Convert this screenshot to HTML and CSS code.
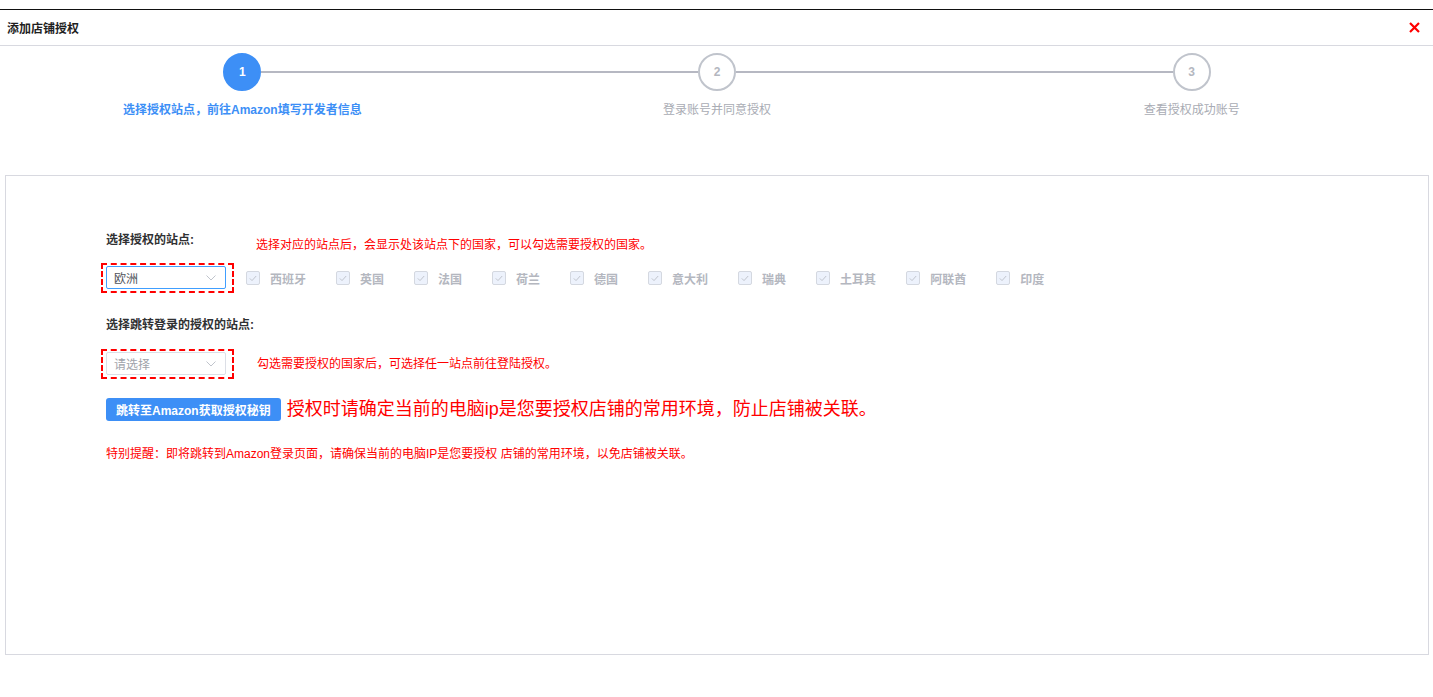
FILE: index.html
```html
<!DOCTYPE html>
<html lang="zh-CN">
<head>
    <meta charset="UTF-8">
    <meta name="viewport" content="width=device-width, initial-scale=1.0">
    <title>添加店铺授权</title>
    <link rel="stylesheet" href="styles.css">
</head>
<body>
    <div class="top-gap"></div>
    <div class="dialog-header">
        <span class="dialog-title">添加店铺授权</span>
        <span class="dialog-close">
            <svg width="11" height="11" viewBox="0 0 11 11">
                <path d="M1 1 L10 10 M10 1 L1 10" stroke="#f00" stroke-width="2.2" fill="none"/>
            </svg>
        </span>
    </div>

    <div class="steps">
        <div class="step active">
            <div class="step-head">
                <span class="step-line hidden"></span>
                <span class="step-icon">1</span>
                <span class="step-line"></span>
            </div>
            <div class="step-title">选择授权站点，前往Amazon填写开发者信息</div>
        </div>
        <div class="step">
            <div class="step-head">
                <span class="step-line"></span>
                <span class="step-icon">2</span>
                <span class="step-line"></span>
            </div>
            <div class="step-title">登录账号并同意授权</div>
        </div>
        <div class="step">
            <div class="step-head">
                <span class="step-line"></span>
                <span class="step-icon">3</span>
                <span class="step-line hidden"></span>
            </div>
            <div class="step-title">查看授权成功账号</div>
        </div>
    </div>

    <div class="panel">
        <div class="row-label">
            <span class="form-label">选择授权的站点:</span>
            <span class="hint hint-low">选择对应的站点后，会显示处该站点下的国家，可以勾选需要授权的国家。</span>
        </div>
        <div class="row-select">
            <div class="dash-box">
                <div class="select focus">
                    <span class="select-value">欧洲</span>
                    <svg class="arrow" width="10" height="6" viewBox="0 0 10 6">
                        <path d="M0.5 0.5 L5 5 L9.5 0.5" stroke="#c0c4cc" stroke-width="1" fill="none"/>
                    </svg>
                </div>
            </div>
            <div class="checks">
                <label class="check"><span class="check-box"><svg width="8" height="7" viewBox="0 0 8 7"><path d="M0.8 3.4 L3 5.6 L7.2 1" stroke="#c0c4cc" stroke-width="1" fill="none"/></svg></span>西班牙</label>
                <label class="check"><span class="check-box"><svg width="8" height="7" viewBox="0 0 8 7"><path d="M0.8 3.4 L3 5.6 L7.2 1" stroke="#c0c4cc" stroke-width="1" fill="none"/></svg></span>英国</label>
                <label class="check"><span class="check-box"><svg width="8" height="7" viewBox="0 0 8 7"><path d="M0.8 3.4 L3 5.6 L7.2 1" stroke="#c0c4cc" stroke-width="1" fill="none"/></svg></span>法国</label>
                <label class="check"><span class="check-box"><svg width="8" height="7" viewBox="0 0 8 7"><path d="M0.8 3.4 L3 5.6 L7.2 1" stroke="#c0c4cc" stroke-width="1" fill="none"/></svg></span>荷兰</label>
                <label class="check"><span class="check-box"><svg width="8" height="7" viewBox="0 0 8 7"><path d="M0.8 3.4 L3 5.6 L7.2 1" stroke="#c0c4cc" stroke-width="1" fill="none"/></svg></span>德国</label>
                <label class="check"><span class="check-box"><svg width="8" height="7" viewBox="0 0 8 7"><path d="M0.8 3.4 L3 5.6 L7.2 1" stroke="#c0c4cc" stroke-width="1" fill="none"/></svg></span>意大利</label>
                <label class="check"><span class="check-box"><svg width="8" height="7" viewBox="0 0 8 7"><path d="M0.8 3.4 L3 5.6 L7.2 1" stroke="#c0c4cc" stroke-width="1" fill="none"/></svg></span>瑞典</label>
                <label class="check"><span class="check-box"><svg width="8" height="7" viewBox="0 0 8 7"><path d="M0.8 3.4 L3 5.6 L7.2 1" stroke="#c0c4cc" stroke-width="1" fill="none"/></svg></span>土耳其</label>
                <label class="check"><span class="check-box"><svg width="8" height="7" viewBox="0 0 8 7"><path d="M0.8 3.4 L3 5.6 L7.2 1" stroke="#c0c4cc" stroke-width="1" fill="none"/></svg></span>阿联酋</label>
                <label class="check"><span class="check-box"><svg width="8" height="7" viewBox="0 0 8 7"><path d="M0.8 3.4 L3 5.6 L7.2 1" stroke="#c0c4cc" stroke-width="1" fill="none"/></svg></span>印度</label>
            </div>
        </div>

        <div class="row-label second">
            <span class="form-label">选择跳转登录的授权的站点:</span>
        </div>
        <div class="row-select second-select">
            <div class="dash-box">
                <div class="select">
                    <span class="select-placeholder">请选择</span>
                    <svg class="arrow" width="10" height="6" viewBox="0 0 10 6">
                        <path d="M0.5 0.5 L5 5 L9.5 0.5" stroke="#c0c4cc" stroke-width="1" fill="none"/>
                    </svg>
                </div>
            </div>
            <span class="hint hint-side">勾选需要授权的国家后，可选择任一站点前往登陆授权。</span>
        </div>

        <div class="row-button">
            <button class="btn">跳转至Amazon获取授权秘钥</button>
            <span class="warn-big">授权时请确定当前的电脑ip是您要授权店铺的常用环境，防止店铺被关联。</span>
        </div>

        <p class="reminder">特别提醒：即将跳转到Amazon登录页面，请确保当前的电脑IP是您要授权 店铺的常用环境，以免店铺被关联。</p>
    </div>
</body>
</html>
```

FILE: styles.css
```css
/* General Styles */
body {
    margin: 0;
    font-family: "Liberation Sans", "Noto Sans CJK SC", sans-serif;
    font-size: 12px;
    color: #303133;
    background: #fff;
}

.top-gap {
    height: 9px;
}

/* Header */
.dialog-header {
    display: flex;
    align-items: center;
    justify-content: space-between;
    height: 35px;
    border-top: 1px solid #111;
    border-bottom: 1px solid #d8d9e0;
    padding: 0 13px 0 7px;
}
.dialog-title {
    font-size: 12px;
    font-weight: bold;
    color: #1f1f1f;
}
.dialog-close {
    display: flex;
    cursor: pointer;
}

/* Steps */
.steps {
    display: flex;
    margin: 7px 4px 0 5px;
}
.step {
    flex: 1;
    display: flex;
    flex-direction: column;
    align-items: stretch;
}
.step-head {
    display: flex;
    align-items: center;
}
.step-line {
    flex: 1;
    height: 2px;
    background: #b6b8c2;
}
.step-line.hidden {
    background: transparent;
}
.step-icon {
    width: 34px;
    height: 34px;
    border: 2px solid #c0c4cc;
    border-radius: 50%;
    display: flex;
    align-items: center;
    justify-content: center;
    font-size: 12px;
    font-weight: bold;
    color: #b4b7bf;
    background: #fff;
}
.step.active .step-icon {
    background: #3d8ff6;
    border-color: #3d8ff6;
    color: #fff;
}
.step-title {
    margin-top: 11px;
    text-align: center;
    line-height: 16px;
    color: #a9acb4;
}
.step.active .step-title {
    color: #3d8ff6;
    font-weight: bold;
}

/* Panel */
.panel {
    box-sizing: border-box;
    height: 480px;
    margin: 57px 4px 0 5px;
    border: 1px solid #d8d9e0;
    padding: 56px 0 0 100px;
}

.row-label {
    display: flex;
    align-items: flex-start;
    line-height: 16px;
}
.row-label.second {
    margin-top: 24px;
}
.form-label {
    width: 150px;
    font-weight: bold;
    color: #303133;
}
.hint {
    color: #f00;
    line-height: 16px;
}
.hint-low {
    margin-top: 5px;
}
.hint-side {
    margin-left: 23px;
}

.row-select {
    display: flex;
    align-items: center;
    margin-top: 10px;
}
.second-select {
    margin-top: 16px;
}
.dash-box {
    margin-left: -5px;
    border: 2px dashed #f00;
    padding: 1px 6px 2px 3px;
}
.select {
    box-sizing: border-box;
    width: 120px;
    height: 23px;
    border: 1px solid #dcdfe6;
    border-radius: 2px;
    display: flex;
    align-items: center;
    justify-content: space-between;
    padding: 0 9px 0 7px;
    background: #fff;
}
.select.focus {
    border-color: #409eff;
}
.select-value {
    color: #50535a;
}
.select-placeholder {
    color: #a0a3aa;
}

/* Checkboxes */
.checks {
    display: flex;
    margin-left: 12px;
}
.check {
    display: flex;
    align-items: center;
    margin-right: 30px;
    color: #b4b7bf;
    font-weight: bold;
    cursor: not-allowed;
}
.check-box {
    box-sizing: border-box;
    width: 14px;
    height: 14px;
    border: 1px solid #d4d8e0;
    border-radius: 2px;
    background: #edf2fc;
    display: flex;
    align-items: center;
    justify-content: center;
    margin-right: 10px;
}

/* Button row */
.row-button {
    display: flex;
    align-items: center;
    margin-top: 19px;
    line-height: 23px;
}
.btn {
    height: 23px;
    padding: 0 10px;
    border: none;
    border-radius: 3px;
    background: #3d8ff6;
    color: #fff;
    font-family: "Liberation Sans", "Noto Sans CJK SC", sans-serif;
    font-size: 12px;
    font-weight: bold;
    cursor: pointer;
}
.warn-big {
    margin-left: 6px;
    font-size: 18px;
    line-height: 23px;
    color: #f00;
}

.reminder {
    margin: 25px 0 0;
    line-height: 16px;
    color: #f00;
}
```
